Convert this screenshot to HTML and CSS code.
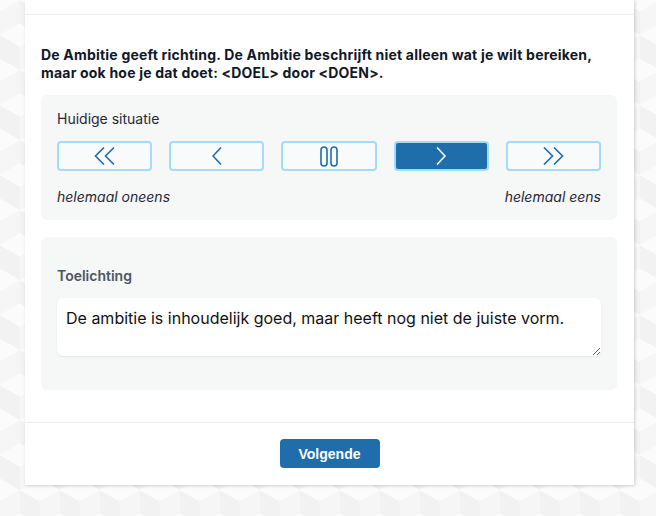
FILE: index.html
```html
<!DOCTYPE html>
<html lang="nl">
  <head>
    <meta charset="UTF-8" />
    <title>Ambitie</title>
    <link rel="stylesheet" href="styles.css">
  </head>
  <body>
    <div class="card">
      <div class="card-head"></div>

      <div class="card-body">
        <p class="question">De Ambitie geeft richting. De Ambitie beschrijft niet alleen wat je wilt bereiken, maar ook hoe je dat doet: &lt;DOEL&gt; door &lt;DOEN&gt;.</p>

        <div class="panel scale">
          <div class="scale-title">Huidige situatie</div>

          <div class="choices">
            <button class="choice" type="button" title="helemaal oneens">
              <svg width="24" height="18" viewBox="0 0 24 18"><polyline points="11,0.5 2.5,9 11,17.5" /><polyline points="21,0.5 12.5,9 21,17.5" /></svg>
            </button>
            <button class="choice" type="button" title="oneens">
              <svg width="10" height="18" viewBox="0 0 10 18"><polyline points="9,0.5 1,9 9,17.5" /></svg>
            </button>
            <button class="choice" type="button" title="neutraal">
              <svg width="18" height="21" viewBox="0 0 18 21"><rect x="1" y="1" width="6" height="19" rx="3" /><rect x="11" y="1" width="6" height="19" rx="3" /></svg>
            </button>
            <button class="choice active" type="button" title="eens">
              <svg width="10" height="18" viewBox="0 0 10 18"><polyline points="1,0.5 9,9 1,17.5" /></svg>
            </button>
            <button class="choice" type="button" title="helemaal eens">
              <svg width="24" height="18" viewBox="0 0 24 18"><polyline points="3,0.5 11.5,9 3,17.5" /><polyline points="13,0.5 21.5,9 13,17.5" /></svg>
            </button>
          </div>

          <div class="scale-labels">
            <span>helemaal oneens</span>
            <span>helemaal eens</span>
          </div>
        </div>

        <div class="panel note">
          <label class="note-label" for="toelichting">Toelichting</label>
          <textarea id="toelichting" class="note-input">De ambitie is inhoudelijk goed, maar heeft nog niet de juiste vorm.</textarea>
        </div>
      </div>

      <div class="card-foot">
        <button class="next" type="button">Volgende</button>
      </div>
    </div>
  </body>
</html>
```

FILE: styles.css
```css
body {
  margin: 0;
  height: 516px;
  overflow: hidden;
  font-family: Inter, "Noto Sans", sans-serif;
  color: #111827;
  background-color: #f6f6f6;
  background-image:
    linear-gradient(30deg, #fbfbfb 12%, transparent 12.5%, transparent 87%, #fbfbfb 87.5%, #fbfbfb),
    linear-gradient(150deg, #fbfbfb 12%, transparent 12.5%, transparent 87%, #fbfbfb 87.5%, #fbfbfb),
    linear-gradient(30deg, #fbfbfb 12%, transparent 12.5%, transparent 87%, #fbfbfb 87.5%, #fbfbfb),
    linear-gradient(150deg, #fbfbfb 12%, transparent 12.5%, transparent 87%, #fbfbfb 87.5%, #fbfbfb),
    linear-gradient(60deg, #f2f2f2 25%, transparent 25.5%, transparent 75%, #f2f2f2 75%, #f2f2f2),
    linear-gradient(60deg, #f2f2f2 25%, transparent 25.5%, transparent 75%, #f2f2f2 75%, #f2f2f2);
  background-size: 40px 70px;
  background-position: 0 0, 0 0, 20px 35px, 20px 35px, 0 0, 20px 35px;
}

.card {
  width: 609px;
  margin-left: 25px;
  background: #fff;
  box-shadow: 1px 1px 3px rgba(0, 0, 0, 0.18);
}

.card-head {
  height: 14px;
  border-bottom: 1px solid #eeeeee;
}

.card-body {
  padding: 31px 17px 32px 16px;
  border-bottom: 1px solid #eeeeee;
}

.question {
  margin: 0 0 13px;
  font-size: 14px;
  line-height: 18px;
  font-weight: 700;
  letter-spacing: 0.2px;
  color: #111827;
}

.panel {
  background: #f6f7f7;
  border-radius: 6px;
}

.scale {
  padding: 14px 16px 13px;
}

.scale-title {
  font-size: 14px;
  line-height: 20px;
  color: #1f2937;
}

.choices {
  display: flex;
  gap: 17px;
  margin-top: 12px;
}

.choice {
  flex: 1;
  height: 30px;
  display: flex;
  align-items: center;
  justify-content: center;
  padding: 0;
  background: #f8fafb;
  border: 2px solid #a3dcf4;
  border-radius: 4px;
  cursor: pointer;
}

.choice svg {
  fill: none;
  stroke: #1f6dab;
  stroke-width: 1.6;
}

.choice.active {
  background: #1f6dab;
}

.choice.active svg {
  stroke: #fff;
}

.scale-labels {
  display: flex;
  justify-content: space-between;
  margin-top: 16px;
  font-size: 14px;
  line-height: 20px;
  font-style: italic;
  color: #1f2937;
}

.note {
  margin-top: 17px;
  padding: 29px 16px 34px;
}

.note-label {
  display: block;
  font-size: 14px;
  line-height: 20px;
  font-weight: 600;
  color: #4b5563;
}

.note-input {
  display: block;
  box-sizing: border-box;
  width: 100%;
  height: 58px;
  margin-top: 12px;
  padding: 8px 9px;
  border: none;
  border-radius: 6px;
  background: #fff;
  box-shadow: 0 1px 2px rgba(0, 0, 0, 0.08);
  font-family: Inter, "Noto Sans", sans-serif;
  font-size: 16px;
  line-height: 24px;
  color: #111;
  resize: vertical;
}

.card-foot {
  display: flex;
  justify-content: center;
  padding: 16px 0 17px;
}

.next {
  width: 100px;
  height: 29px;
  padding: 0;
  border: none;
  border-radius: 4px;
  background: #1f6dab;
  color: #fff;
  font-family: "Liberation Sans", Arial, sans-serif;
  font-size: 14px;
  font-weight: 700;
  cursor: pointer;
}
```
